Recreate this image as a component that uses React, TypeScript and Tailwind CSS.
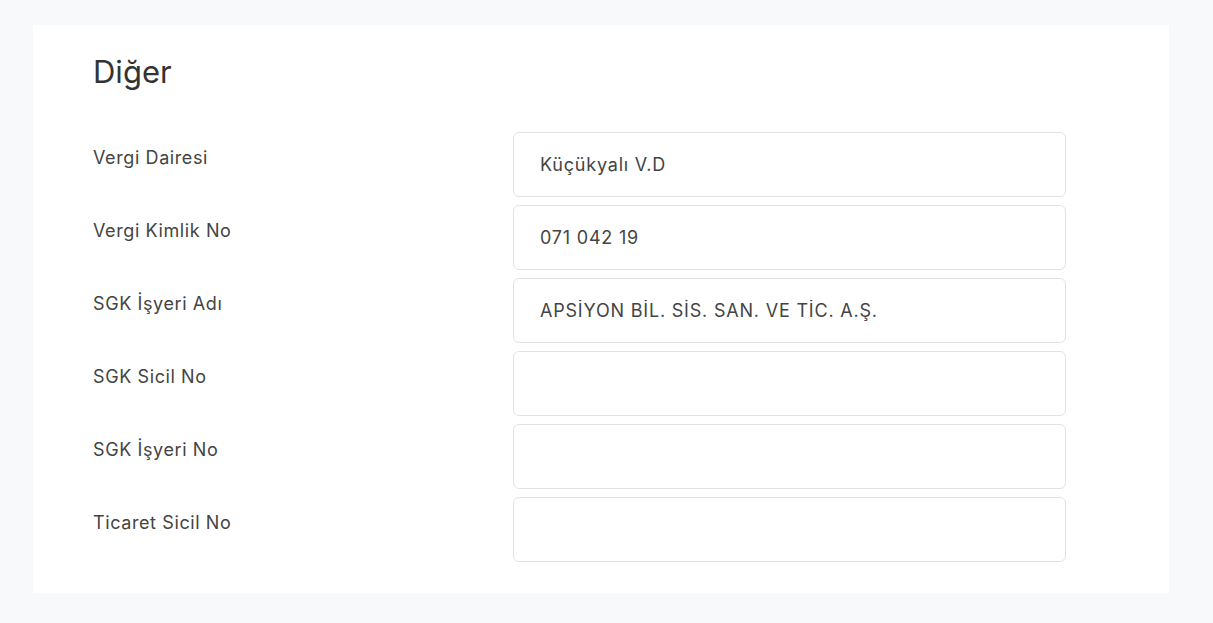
import React from 'react';

const rows: { label: string; value: string }[] = [
  { label: 'Vergi Dairesi', value: 'Küçükyalı V.D' },
  { label: 'Vergi Kimlik No', value: '071 042 19' },
  { label: 'SGK İşyeri Adı', value: 'APSİYON BİL. SİS. SAN. VE TİC. A.Ş.' },
  { label: 'SGK Sicil No', value: '' },
  { label: 'SGK İşyeri No', value: '' },
  { label: 'Ticaret Sicil No', value: '' },
];

export default function App() {
  return (
    <div className="min-h-[623px] w-full bg-[#f8f9fa] pt-[25px] pl-[33px] pr-[44px] font-['Inter',sans-serif]">
      <div className="w-[1136px] bg-white pl-[60px] pt-[27px] pb-[31px]">
        <h2 className="text-[31px] leading-[40px] text-[#333] mb-[40px]">Diğer</h2>
        <div className="flex flex-col gap-[8px]">
          {rows.map(row => (
            <div key={row.label} className="flex items-start">
              <label className="w-[420px] pt-[14px] text-[18px] leading-[24px] tracking-[0.6px] text-[#444]">{row.label}</label>
              <input
                readOnly
                value={row.value}
                className="w-[553px] h-[65px] rounded-[6px] border border-[#e2e2e2] bg-white pl-[26px] text-[18px] tracking-[0.8px] text-[#444] outline-none"
              />
            </div>
          ))}
        </div>
      </div>
    </div>
  );
}
